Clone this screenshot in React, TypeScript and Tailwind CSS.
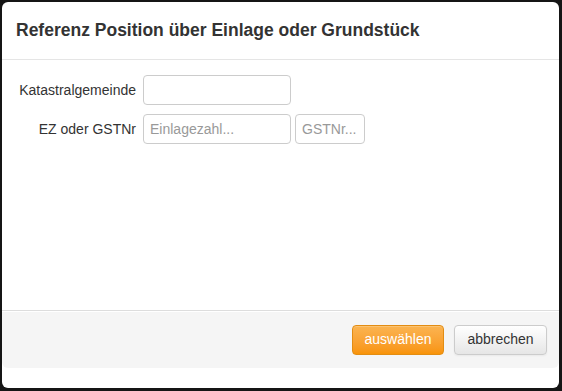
import React from 'react';

export default function App() {
  return (
    <div className="w-[562px] h-[391px] bg-[#151515] pt-[2px] pl-[2px] pr-[3px] pb-[3px] font-['Liberation_Sans',Arial,sans-serif] text-[14px] text-[#333]">
      <div className="h-full bg-white rounded-[6px] flex flex-col">
        {/* header */}
        <div className="h-[58px] shrink-0 pl-[14px] pr-4 flex items-center border-b border-[#e5e5e5]">
          <h3 className="text-[17.5px] font-bold text-[#333] leading-none">Referenz Position über Einlage oder Grundstück</h3>
        </div>

        {/* body */}
        <div className="flex-1 pt-[15px] flex flex-col gap-[9px]">
          <div className="flex items-center">
            <label className="w-[135px] text-right pr-[1px]">Katastralgemeinde</label>
            <input
              className="ml-[6px] w-[148px] h-[30px] border border-[#ccc] rounded-[4px] px-[6px] outline-none"
              type="text"
            />
          </div>
          <div className="flex items-center">
            <label className="w-[135px] text-right pr-[1px]">EZ oder GSTNr</label>
            <input
              className="ml-[6px] w-[148px] h-[30px] border border-[#ccc] rounded-[4px] px-[6px] outline-none placeholder:text-[#999]"
              type="text"
              placeholder="Einlagezahl..."
            />
            <input
              className="ml-[4px] w-[70px] h-[30px] border border-[#ccc] rounded-[4px] px-[6px] outline-none placeholder:text-[#999]"
              type="text"
              placeholder="GSTNr..."
            />
          </div>
        </div>

        {/* footer */}
        <div className="h-[58px] shrink-0 bg-[#f5f5f5] border-t border-[#ddd] rounded-b-[6px] flex items-center justify-end gap-[10px] pr-[12px] shadow-[inset_0_1px_0_#fff]">
          <button className="w-[92px] h-[30px] rounded-[4px] text-white bg-gradient-to-b from-[#fbb450] to-[#f89406] border border-[#e38d13] shadow-[inset_0_1px_0_rgba(255,255,255,0.2)]">
            auswählen
          </button>
          <button className="w-[93px] h-[30px] rounded-[4px] text-[#333] bg-gradient-to-b from-white to-[#e6e6e6] border border-[#ccc] shadow-[0_1px_2px_rgba(0,0,0,0.05)]">
            abbrechen
          </button>
        </div>
        <div className="h-[20px] shrink-0" />
      </div>
    </div>
  );
}
